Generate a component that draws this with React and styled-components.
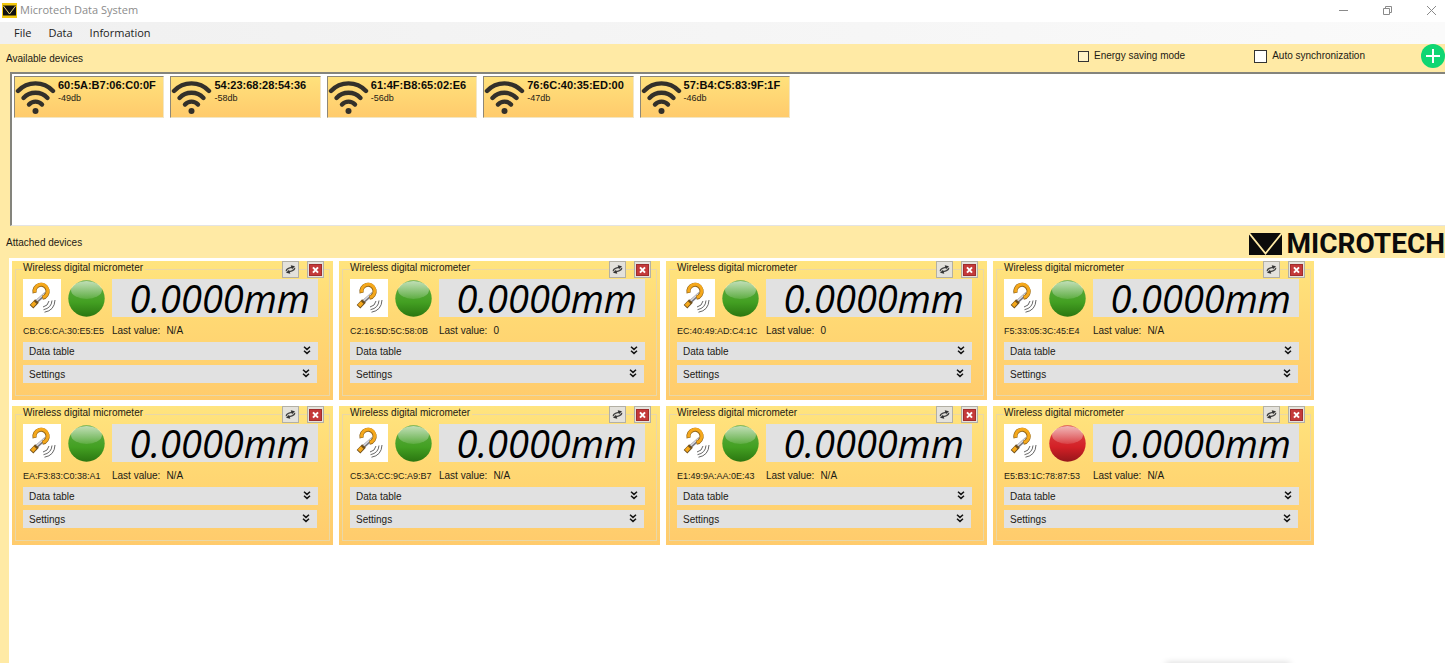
import React, { useState } from 'react';
import styled, { createGlobalStyle } from 'styled-components';

const available = [
  { mac: '60:5A:B7:06:C0:0F', signal: '-49db' },
  { mac: '54:23:68:28:54:36', signal: '-58db' },
  { mac: '61:4F:B8:65:02:E6', signal: '-56db' },
  { mac: '76:6C:40:35:ED:00', signal: '-47db' },
  { mac: '57:B4:C5:83:9F:1F', signal: '-46db' },
];

const attached = [
  { mac: 'CB:C6:CA:30:E5:E5', last: 'N/A', online: true },
  { mac: 'C2:16:5D:5C:58:0B', last: '0', online: true },
  { mac: 'EC:40:49:AD:C4:1C', last: '0', online: true },
  { mac: 'F5:33:05:3C:45:E4', last: 'N/A', online: true },
  { mac: 'EA:F3:83:C0:38:A1', last: 'N/A', online: true },
  { mac: 'C5:3A:CC:9C:A9:B7', last: 'N/A', online: true },
  { mac: 'E1:49:9A:AA:0E:43', last: 'N/A', online: true },
  { mac: 'E5:B3:1C:78:87:53', last: 'N/A', online: false },
];

const AppIcon = () => (
  <svg width="15" height="15" viewBox="0 0 15 15" aria-hidden="true">
    <rect width="15" height="15" fill="#f2c80f" />
    <rect x="1" y="2.5" width="13" height="10" fill="#111" />
    <path d="M1.5 3 L7.5 11 L13.5 3" fill="none" stroke="#f0d878" strokeWidth="1" />
  </svg>
);

const WifiIcon = () => (
  <svg width="42" height="40" viewBox="0 0 42 40" fill="none" stroke="#33302a" strokeWidth="4.4" strokeLinecap="round" aria-hidden="true">
    <path d="M3 14 A24 24 0 0 1 38 14" />
    <path d="M8.5 21 A16.5 16.5 0 0 1 32.5 21" />
    <path d="M14 27.5 A8.8 8.8 0 0 1 27 27.5" />
    <circle cx="20.5" cy="34" r="3" fill="#33302a" stroke="none" />
  </svg>
);

const MicrometerIcon = () => (
  <svg width="38" height="38" viewBox="0 0 38 38" fill="none" aria-hidden="true">
    <path d="M22.5 14.5 L12 24" stroke="#77777f" strokeWidth="3.2" />
    <path d="M21.5 14.5 L12 23.2" stroke="#dcdce2" strokeWidth="1.4" />
    <path d="M11.6 14 A6.6 6.6 0 1 1 19.4 18.8" stroke="#8f6318" strokeWidth="4.2" />
    <path d="M11.8 13.4 A6.6 6.6 0 1 1 19.8 18.4" stroke="#f5a81c" strokeWidth="3" />
    <path d="M14 22 L8.5 27.8" stroke="#6f4f1c" strokeWidth="5" />
    <path d="M12.2 23.6 L9 27" stroke="#f5a81c" strokeWidth="3.6" />
    <g stroke="#666" strokeWidth="1">
      <path d="M26 22 Q25 27 20 28" />
      <path d="M29 21.5 Q28.5 29 20.5 30.7" />
      <path d="M32 21 Q31.5 31.5 21.5 33.2" />
    </g>
  </svg>
);

const StatusBall = ({ online }) => {
  const id = online ? 'ballOn' : 'ballOff';
  const [light, mid, dark] = online ? ['#62ad48', '#43a022', '#2b7611'] : ['#dc4a4a', '#d32026', '#96161b'];
  return (
    <svg width="37" height="37" viewBox="0 0 37 37" role="img" aria-label={online ? 'Online' : 'Offline'}>
      <defs>
        <linearGradient id={id} x1="0" y1="0" x2="0" y2="1">
          <stop offset="0" stopColor={light} />
          <stop offset="0.6" stopColor={mid} />
          <stop offset="1" stopColor={dark} />
        </linearGradient>
        <linearGradient id={`${id}Gloss`} x1="0" y1="0" x2="0" y2="1">
          <stop offset="0" stopColor="#fff" stopOpacity="0.6" />
          <stop offset="1" stopColor="#fff" stopOpacity="0.12" />
        </linearGradient>
      </defs>
      <circle cx="18.5" cy="18.5" r="18.2" fill={`url(#${id})`} />
      <ellipse cx="18.5" cy="10" rx="15.5" ry="9" fill={`url(#${id}Gloss)`} />
    </svg>
  );
};

const SyncIcon = () => (
  <svg width="13" height="13" viewBox="0 0 13 13" fill="none" stroke="#444" strokeWidth="1.3" aria-hidden="true">
    <g transform="rotate(-18 6.5 6.5)">
      <path d="M2 6.8 Q2.5 4.8 5.5 4.8 L9 4.8" />
      <path d="M11 6.2 Q10.5 8.2 7.5 8.2 L4 8.2" />
      <path d="M8 2.6 L11.8 4.8 L8 6.6 Z" fill="#333" stroke="none" />
      <path d="M5 6.4 L1.2 8.2 L5 10.4 Z" fill="#333" stroke="none" />
    </g>
  </svg>
);

const RemoveIcon = () => (
  <svg width="13" height="12" viewBox="0 0 13 12" aria-hidden="true">
    <rect x="0.5" y="0.5" width="12" height="11" fill="#c43a3a" stroke="#a02c2c" />
    <path d="M4 3.4 L9 8.6 M9 3.4 L4 8.6" stroke="#fff" strokeWidth="2" />
  </svg>
);

const ExpandIcon = () => (
  <svg width="8" height="9" viewBox="0 0 8 9" fill="none" stroke="#111" strokeWidth="1.5" aria-hidden="true">
    <path d="M1 0.8 L4 3.4 L7 0.8" />
    <path d="M1 4.8 L4 7.4 L7 4.8" />
  </svg>
);

const LogoMark = () => (
  <svg width="33" height="22" viewBox="0 0 33 22" aria-hidden="true">
    <rect width="33" height="22" fill="#0b0b0b" />
    <path d="M0 0 L16.5 20.5 L33 0" fill="none" stroke="#ffeaa5" strokeWidth="1.8" />
  </svg>
);

const DeviceCard = ({ device }) => (
  <Card>
    <Group>
      <legend>Wireless digital micrometer</legend>
      <Reading>
        <Picture><MicrometerIcon /></Picture>
        <StatusBall online={device.online} />
        <Value>0.0000mm</Value>
      </Reading>
      <Info>
        <Mac>{device.mac}</Mac>
        <span>Last value:</span>
        <span>{device.last}</span>
      </Info>
      <Expander type="button">Data table<ExpandIcon /></Expander>
      <Expander type="button" $short>Settings<ExpandIcon /></Expander>
    </Group>
    <Tools>
      <ToolButton type="button" aria-label="Reconnect"><SyncIcon /></ToolButton>
      <ToolButton type="button" aria-label="Remove"><RemoveIcon /></ToolButton>
    </Tools>
  </Card>
);

const App = () => {
  const [energySaving, setEnergySaving] = useState(false);
  const [autoSync, setAutoSync] = useState(false);

  return (
    <Window>
      <GlobalStyle />
      <TitleBar>
        <AppIcon />
        <Title>Microtech Data System</Title>
        <WindowButton type="button" aria-label="Minimize">
          <svg width="11" height="11" viewBox="0 0 11 11"><path d="M1 5.5 H10" /></svg>
        </WindowButton>
        <WindowButton type="button" aria-label="Restore">
          <svg width="11" height="11" viewBox="0 0 11 11"><path d="M1.5 3.5 H7.5 V9.5 H1.5 Z M3.5 3.5 V1.5 H9.5 V7.5 H7.5" /></svg>
        </WindowButton>
        <WindowButton type="button" aria-label="Close">
          <svg width="11" height="11" viewBox="0 0 11 11"><path d="M1 1 L10 10 M10 1 L1 10" /></svg>
        </WindowButton>
      </TitleBar>
      <MenuBar>
        <MenuItem type="button">File</MenuItem>
        <MenuItem type="button">Data</MenuItem>
        <MenuItem type="button">Information</MenuItem>
      </MenuBar>

      <Toolbar>
        <Heading>Available devices</Heading>
        <Options>
          <Check $size={11}>
            <input type="checkbox" checked={energySaving} onChange={e => setEnergySaving(e.target.checked)} />
            Energy saving mode
          </Check>
          <Check $size={13}>
            <input type="checkbox" checked={autoSync} onChange={e => setAutoSync(e.target.checked)} />
            Auto synchronization
          </Check>
          <AddButton type="button" aria-label="Add device">
            <svg width="24" height="24" viewBox="0 0 24 24">
              <circle cx="12" cy="12" r="12" fill="#0fd672" />
              <path d="M12 5 V19 M5 12 H19" stroke="#fff" strokeWidth="2" />
            </svg>
          </AddButton>
        </Options>
      </Toolbar>

      <AvailableList>
        <Tiles>
          {available.map(item => (
            <Tile key={item.mac} type="button">
              <WifiIcon />
              <TileText>
                <b>{item.mac}</b>
                <span>{item.signal}</span>
              </TileText>
            </Tile>
          ))}
        </Tiles>
      </AvailableList>

      <AttachedBar>
        <Heading>Attached devices</Heading>
        <Logo><LogoMark />MICROTECH</Logo>
      </AttachedBar>

      <AttachedPanel>
        <Cards>
          {attached.map(device => <DeviceCard key={device.mac} device={device} />)}
        </Cards>
      </AttachedPanel>
    </Window>
  )
}

const GlobalStyle = createGlobalStyle`
  * { box-sizing: border-box; }
  body {
    margin: 0;
    background: #ffeaa5;
    color: #1c1a14;
    font: 10px/12px "Liberation Sans", Arial, sans-serif;
  }
  button {
    padding: 0;
    border: 0;
    background: none;
    color: inherit;
    font: inherit;
  }
  svg {
    display: block;
    flex: none;
  }
`

const Window = styled.div`
  display: flex;
  flex-direction: column;
  min-height: 100vh;
  overflow: hidden;
`

const TitleBar = styled.header`
  display: flex;
  align-items: center;
  height: 22px;
  padding: 0 8px 2px 2px;
  background: #fff;
`

const Title = styled.h1`
  flex: 1;
  margin: 0 0 0 3px;
  color: #8c8c8c;
  font: 11px/16px "Open Sans", "Segoe UI", sans-serif;
`

const WindowButton = styled.button`
  margin-left: 33px;

  path {
    fill: none;
    stroke: #8a8a8a;
  }
`

const MenuBar = styled.nav`
  display: flex;
  align-items: center;
  gap: 17px;
  height: 22px;
  padding: 0 14px 1px;
  background: linear-gradient(90deg, #f0f0f0, #fafafa);
`

const MenuItem = styled.button`
  color: #222;
  font: 11px/16px "Open Sans", "Segoe UI", sans-serif;
`

const Toolbar = styled.div`
  display: flex;
  align-items: center;
  justify-content: space-between;
  height: 28px;
  padding-left: 6px;
`

const Heading = styled.h2`
  margin: 0;
  padding-top: 2px;
  font-size: 10px;
  font-weight: 400;
`

const Options = styled.div`
  display: flex;
  align-items: center;
  height: 24px;
  margin-bottom: 4px;
`

const Check = styled.label`
  display: flex;
  align-items: center;
  gap: 5px;
  margin-right: ${p => (p.$size === 11 ? 69 : 56)}px;

  input {
    appearance: none;
    width: ${p => p.$size}px;
    height: ${p => p.$size}px;
    margin: 0;
    border: 1px solid #333;
    background: ${p => (p.$size === 11 ? '#fff3c8' : '#fff')};
  }
  input:checked {
    background: #333;
  }
`

const AddButton = styled.button`
  border-radius: 50%;
`

const AvailableList = styled.section`
  height: 154px;
  margin-left: 10px;
  padding: 2px;
  border-top: 2px solid #84847c;
  border-left: 2px solid #84847c;
  border-bottom: 1px solid #e4e4e4;
  background: #fff;
`

const Tiles = styled.div`
  display: grid;
  grid-template-columns: repeat(5, 1fr);
  gap: 6px;
  max-width: 776px;
`

const Tile = styled.button`
  display: flex;
  height: 42px;
  border: 1px solid #8d8778;
  border-right-color: #f3e6c4;
  border-bottom-color: #f3e6c4;
  background: linear-gradient(#ffe17c, #ffcb6c);
  text-align: left;
`

const TileText = styled.div`
  display: flex;
  flex-direction: column;
  padding: 2px 0 0 1px;

  b {
    font-size: 11px;
    line-height: 12px;
    color: #0c0b08;
  }
  span {
    font-size: 9px;
    line-height: 14px;
  }
`

const AttachedBar = styled.div`
  display: flex;
  align-items: center;
  justify-content: space-between;
  height: 32px;
  padding-left: 6px;
`

const Logo = styled.div`
  display: flex;
  align-items: center;
  gap: 4px;
  padding-top: 4px;
  color: #0b0b0b;
  font: 700 28px/24px Roboto, "Liberation Sans", sans-serif;
`

const AttachedPanel = styled.main`
  position: relative;
  flex: 1;
  margin-left: 9px;
  padding: 3px;
  background: #fff;

  &::after {
    content: '';
    position: absolute;
    right: 155px;
    bottom: -4px;
    width: 124px;
    height: 4px;
    box-shadow: 0 0 6px #ccc;
  }
`

const Cards = styled.div`
  display: grid;
  grid-template-columns: repeat(4, 1fr);
  gap: 6px;
  max-width: 1302px;
`

const Card = styled.article`
  position: relative;
  padding: 0 3px 4px;
  background: linear-gradient(#ffe47e, #ffd974 40%, #ffcb6c);
`

const Group = styled.fieldset`
  min-width: 0;
  margin: 0;
  padding: 2px 11px 12px 7px;
  border: 1px solid #e9d7a8;

  legend {
    padding: 1px 2px 3px 0;
  }
`

const Reading = styled.div`
  display: flex;
  align-items: center;
  gap: 7px;
`

const Picture = styled.div`
  background: #fff;
`

const Value = styled.output`
  flex: 1;
  padding-right: 8px;
  background: #e1e1e1;
  color: #000;
  font: italic 38px/38px "Open Sans", "Noto Sans", sans-serif;
  text-align: right;
`

const Info = styled.div`
  display: flex;
  align-items: center;
  gap: 6px;
  height: 25px;
  padding-top: 3px;
`

const Mac = styled.span`
  width: 83px;
  font-size: 9px;
  white-space: nowrap;
`

const Tools = styled.div`
  position: absolute;
  top: 0;
  right: 9px;
  display: flex;
  gap: 8px;
`

const ToolButton = styled.button`
  display: grid;
  place-items: center;
  width: 17px;
  height: 17px;
  border: 1px solid #b3b0a4;
  background: #e4e2dc;
`

const Expander = styled.button`
  display: flex;
  justify-content: space-between;
  width: ${p => (p.$short ? 'calc(100% - 1px)' : '100%')};
  height: 18px;
  padding: 4px 7px 0 6px;
  background: #e1e1e1;

  & + & {
    margin-top: 5px;
  }
`

export default App
